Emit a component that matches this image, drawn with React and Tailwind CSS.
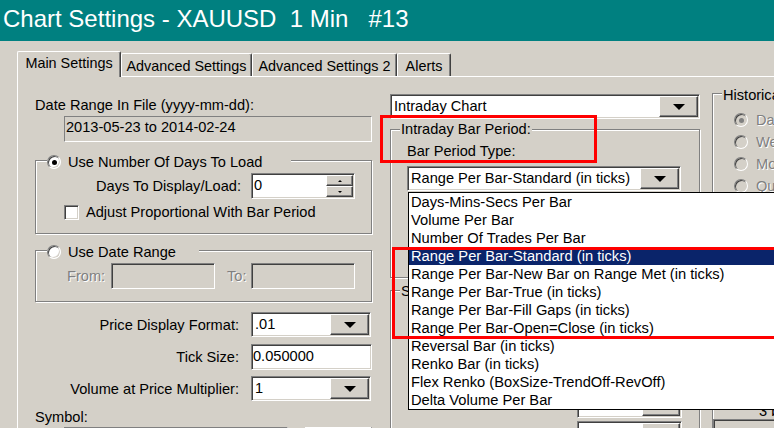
import React from "react";

const GRAY = "bg-[#d4d0c8]";
const DIS = "text-[#808080] [text-shadow:1px_1px_0_#fff]";

function Sunken({ className = "", children }) {
  return (
    <div
      className={`border border-t-[#808080] border-l-[#808080] border-b-white border-r-white shadow-[inset_1px_1px_0_#404040,inset_-1px_-1px_0_#d4d0c8] p-[1px] ${className}`}
    >
      {children}
    </div>
  );
}

function Raised({ className = "", children }) {
  return (
    <div
      className={`border border-t-white border-l-white border-b-[#404040] border-r-[#404040] shadow-[inset_-1px_-1px_0_#808080] ${GRAY} flex items-center justify-center ${className}`}
    >
      {children}
    </div>
  );
}

const Arrow = () => (
  <div className="w-0 h-0 border-x-[6px] border-x-transparent border-t-[6px] border-t-black" />
);

function Combo({ className = "", text }) {
  return (
    <Sunken className={`bg-white flex ${className}`}>
      <div className="flex-1 pl-[2px] leading-[21px] whitespace-nowrap overflow-hidden">{text}</div>
      <Raised className="w-[39px] h-full">
        <Arrow />
      </Raised>
    </Sunken>
  );
}

function Radio({ checked, disabled }) {
  return (
    <div
      className={`w-[14px] h-[14px] rounded-full border border-t-[#808080] border-l-[#808080] border-b-white border-r-white shadow-[inset_1px_1px_0_#404040,inset_-1px_-1px_0_#d4d0c8] flex items-center justify-center shrink-0 ${
        disabled ? GRAY : "bg-white"
      }`}
    >
      {checked && <div className={`w-[5px] h-[5px] rounded-full ${disabled ? "bg-[#808080]" : "bg-black"}`} />}
    </div>
  );
}

function Group({ className = "", children }) {
  return (
    <div className={`border border-[#808080] shadow-[inset_1px_1px_0_#fff,1px_1px_0_#fff] flex flex-col ${className}`}>
      {children}
    </div>
  );
}

function Tab({ sel, w, children }) {
  return (
    <div
      className={`${w} ${
        sel ? "h-[26px] -mb-px relative z-10 pt-[3px]" : "h-[23px] pt-[4px]"
      } ${GRAY} border-t border-l border-white border-r border-r-[#404040] shadow-[inset_-1px_0_0_#808080] rounded-t-[2px] text-center leading-[16px] whitespace-nowrap`}
    >
      {children}
    </div>
  );
}

const items = [
  "Days-Mins-Secs Per Bar",
  "Volume Per Bar",
  "Number Of Trades Per Bar",
  "Range Per Bar-Standard (in ticks)",
  "Range Per Bar-New Bar on Range Met (in ticks)",
  "Range Per Bar-True (in ticks)",
  "Range Per Bar-Fill Gaps (in ticks)",
  "Range Per Bar-Open=Close (in ticks)",
  "Reversal Bar (in ticks)",
  "Renko Bar (in ticks)",
  "Flex Renko (BoxSize-TrendOff-RevOff)",
  "Delta Volume Per Bar",
];

export default function App() {
  return (
    <div
      className={`relative w-[774px] h-[428px] overflow-hidden ${GRAY} text-black text-[14.6px] font-['Liberation_Sans',Arial,sans-serif]`}
    >
      <div className="h-[41px] bg-[#008080] text-white text-[24px] leading-[28px] pl-[3px] pt-[5px] whitespace-pre">
        Chart Settings - XAUUSD  1 Min   #13
      </div>

      <div className="flex items-end h-[35px] pl-[17px] text-[14.4px]">
        <Tab sel w="w-[104px]">Main Settings</Tab>
        <Tab w="w-[131px]">Advanced Settings</Tab>
        <Tab w="w-[145px]">Advanced Settings 2</Tab>
        <Tab w="w-[54px]">Alerts</Tab>
      </div>

      <div className="flex items-start border-t border-l border-white ml-[17px] h-[352px]">
        {/* left column */}
        <div className="ml-[17px] w-[337px] flex flex-col shrink-0">
          <div className="mt-[20px] leading-[16px] whitespace-nowrap">Date Range In File (yyyy-mm-dd):</div>
          <div className="mt-[3px] ml-[29px] w-[308px] h-[26px] border border-t-[#808080] border-l-[#808080] border-b-white border-r-white pl-[1px] pt-[1px] leading-[18px]">
            2013-05-23 to 2014-02-24
          </div>

          <Group className="mt-[18px] h-[74px]">
            <div className={`-mt-[7px] ml-[11px] w-[244px] h-[16px] ${GRAY} flex items-center gap-[7px]`}>
              <Radio checked />
              <span className="leading-[16px] whitespace-nowrap">Use Number Of Days To Load</span>
            </div>
            <div className="flex items-center mt-[3px]">
              <div className="w-[205px] text-right leading-[16px] whitespace-nowrap">Days To Display/Load:</div>
              <Sunken className="ml-[10px] w-[104px] h-[26px] bg-white flex">
                <div className="flex-1 pl-[1px] leading-[20px]">0</div>
                <div className="w-[27px] flex flex-col">
                  <Raised className="h-[11px]">
                    <div className="w-0 h-0 border-x-[2px] border-x-transparent border-b-[2px] border-b-black" />
                  </Raised>
                  <Raised className="h-[11px]">
                    <div className="w-0 h-0 border-x-[2px] border-x-transparent border-t-[2px] border-t-black" />
                  </Raised>
                </div>
              </Sunken>
            </div>
            <div className="flex items-center mt-[5px] ml-[28px] h-[16px]">
              <Sunken className="w-[15px] h-[15px] bg-white" />
              <span className="ml-[7px] leading-[16px] whitespace-nowrap">Adjust Proportional With Bar Period</span>
            </div>
          </Group>

          <Group className="mt-[16px] h-[52px]">
            <div className={`-mt-[7px] ml-[11px] w-[152px] h-[16px] ${GRAY} flex items-center gap-[7px]`}>
              <Radio />
              <span className="leading-[16px] whitespace-nowrap">Use Date Range</span>
            </div>
            <div className="flex items-center mt-[3px] h-[26px]">
              <div className={`ml-[31px] w-[44px] leading-[16px] ${DIS}`}>From:</div>
              <Sunken className={`w-[104px] h-[26px] ${GRAY}`} />
              <div className={`ml-[12px] w-[24px] leading-[16px] ${DIS}`}>To:</div>
              <Sunken className={`w-[104px] h-[26px] ${GRAY}`} />
            </div>
          </Group>

          <div className="flex items-center mt-[10px]">
            <div className="w-[204px] text-right leading-[16px] whitespace-nowrap">Price Display Format:</div>
            <Combo className="ml-[12px] w-[120px] h-[25px]" text=".01" />
          </div>
          <div className="flex items-center mt-[7px]">
            <div className="w-[204px] text-right leading-[16px] whitespace-nowrap">Tick Size:</div>
            <Sunken className="ml-[12px] w-[121px] h-[26px] bg-white pl-[1px] leading-[20px]">0.050000</Sunken>
          </div>
          <div className="flex items-center mt-[6px]">
            <div className="w-[204px] text-right leading-[16px] whitespace-nowrap">Volume at Price Multiplier:</div>
            <Combo className="ml-[12px] w-[120px] h-[25px]" text="1" />
          </div>
          <div className="mt-[8px] leading-[16px]">Symbol:</div>
          <div className="flex mt-[2px]">
            <Sunken className={`ml-[29px] w-[224px] h-[24px] ${GRAY}`} />
            <Raised className="ml-[17px] w-[67px] h-[24px]" />
          </div>
        </div>

        {/* right column */}
        <div className="ml-[18px] w-[310px] flex flex-col shrink-0">
          <Combo className="mt-[17px] h-[25px] w-[310px]" text="Intraday Chart" />
          <Group className="mt-[10px] h-[149px]">
            <div className={`-mt-[9px] ml-[9px] px-[1px] w-fit ${GRAY} leading-[16px] whitespace-nowrap`}>
              Intraday Bar Period:
            </div>
            <div className="mt-[6px] ml-[16px] leading-[16px] whitespace-nowrap">Bar Period Type:</div>
            <Combo className="mt-[7px] ml-[16px] w-[274px] h-[25px]" text="Range Per Bar-Standard (in ticks)" />
          </Group>
          <Group className="mt-[12px] h-[200px]">
            <div className={`-mt-[8px] ml-[9px] pl-[1px] w-[8px] overflow-hidden ${GRAY} leading-[16px] whitespace-nowrap`}>
              Session Times:
            </div>
            <div className="mt-[94px] ml-[186px] flex flex-col gap-[3px]">
              <Sunken className="w-[105px] h-[25px] bg-white flex justify-end">
                <Raised className="w-[38px] h-full" />
              </Sunken>
              <Sunken className="w-[105px] h-[25px] bg-white flex justify-end">
                <Raised className="w-[38px] h-full">
                  <div className="w-0 h-0 border-x-[2px] border-x-transparent border-b-[2px] border-b-black" />
                </Raised>
              </Sunken>
            </div>
          </Group>
        </div>

        {/* historic column */}
        <div className="ml-[12px] w-[120px] flex flex-col shrink-0">
          <Group className="mt-[16px] h-[400px]">
            <div className={`-mt-[7px] ml-[9px] px-[1px] w-fit ${GRAY} leading-[16px] whitespace-nowrap`}>
              Historical Chart
            </div>
            <div className="mt-[9px] ml-[21px] flex flex-col gap-[6px]">
              {["Daily", "Weekly", "Monthly", "Quarterly"].map((t, i) => (
                <div key={t} className="flex items-center h-[16px] gap-[8px]">
                  <Radio disabled checked={i === 0} />
                  <span className={`leading-[16px] whitespace-nowrap ${DIS}`}>{t}</span>
                </div>
              ))}
            </div>
            <div className="mt-[209px] ml-[46px] leading-[16px] whitespace-nowrap">3 bars</div>
            <Sunken className={`mt-[0px] w-[100px] h-[30px] ${GRAY}`} />
          </Group>
        </div>
      </div>

      {/* dropdown list overlay */}
      <div className="absolute left-[408px] top-[192px] w-[400px] h-[218px] bg-white border border-black text-[14.7px]">
        {items.map((t, i) => (
          <div
            key={t}
            className={`h-[18px] leading-[18px] pl-[2px] whitespace-nowrap ${i === 3 ? "bg-[#0a246a] text-white" : ""}`}
          >
            {t}
          </div>
        ))}
      </div>

      {/* red annotation boxes */}
      <div className="absolute left-[380px] top-[115px] w-[217px] h-[48px] border-[3px] border-[#ff0000]" />
      <div className="absolute left-[392px] top-[247px] w-[420px] h-[92px] border-[3px] border-[#ff0000]" />
    </div>
  );
}
